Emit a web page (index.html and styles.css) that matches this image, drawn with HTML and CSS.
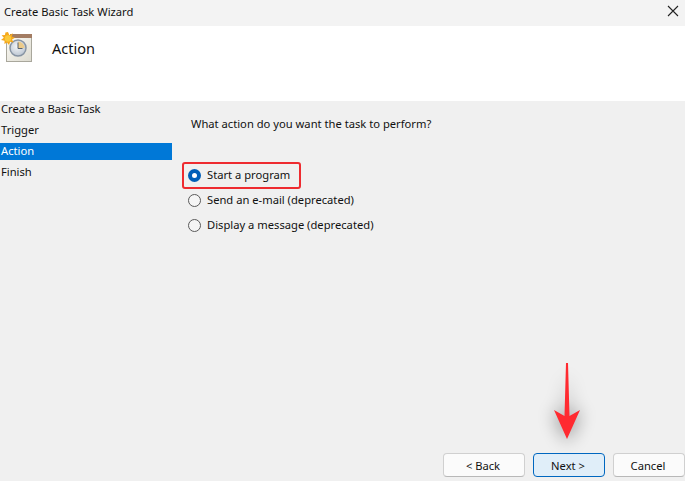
FILE: index.html
```html
<!DOCTYPE html>
<html lang="en">
<head>
<meta charset="utf-8">
<title>Create Basic Task Wizard</title>
<link rel="stylesheet" href="styles.css">
</head>
<body>
<div class="window">
  <header class="titlebar">
    <span class="title">Create Basic Task Wizard</span>
    <svg class="close" width="12" height="12" viewBox="0 0 12 12"><path d="M1 1l10 10M11 1L1 11" stroke="#222" stroke-width="1.1" fill="none"/></svg>
  </header>
  <section class="banner">
    <svg class="task-icon" width="33" height="33" viewBox="0 0 33 33">
      <defs>
        <linearGradient id="page" x1="0" y1="0" x2="1" y2="1"><stop offset="0" stop-color="#fcfbf6"/><stop offset="1" stop-color="#dddbd0"/></linearGradient>
        <radialGradient id="face" cx=".45" cy=".4" r=".6"><stop offset="0" stop-color="#f4f6f8"/><stop offset="1" stop-color="#bcc6d2"/></radialGradient>
      </defs>
      <rect x="6" y="4" width="26" height="27" fill="#a9a79c"/>
      <rect x="7" y="6" width="24" height="24" fill="url(#page)"/>
      <rect x="10" y="3" width="22" height="4" fill="#a37c62"/>
      <circle cx="18" cy="17" r="8" fill="url(#face)" stroke="#8794a3" stroke-width="1.5"/>
      <path d="M18 17V10.500a6.500 6.500 0 0 1 6.500 6.500z" fill="#eccb8a"/>
      <path d="M18 11.500V17.500H22.500" stroke="#56616e" stroke-width="1" fill="none"/>
      <path d="M8 1l1.400 3.200L12.800 2.200 11.800 5.400l3.200 1.400-3 1.600 1.600 3-3.400-.6L9 14 7 11.400 4.400 13l.2-3.200L1 9 3.800 6.800 1.600 4.200l3.400-.2L5.400 1.600z" fill="#f5a81c"/>
      <circle cx="8" cy="7.500" r="3.200" fill="#fbc93a"/>
    </svg>
    <h1 class="heading">Action</h1>
  </section>
  <div class="content">
    <nav class="steps">
      <div class="step">Create a Basic Task</div>
      <div class="step">Trigger</div>
      <div class="step step-active">Action</div>
      <div class="step">Finish</div>
    </nav>
    <main class="pane">
      <p class="question">What action do you want the task to perform?</p>
      <div class="options">
        <div class="option"><span class="radio radio-on"></span>Start a program</div>
        <div class="option"><span class="radio"></span>Send an e-mail (deprecated)</div>
        <div class="option"><span class="radio"></span>Display a message (deprecated)</div>
      </div>
    </main>
  </div>
  <footer class="actions">
    <button class="btn btn-back">&lt; Back</button>
    <button class="btn btn-next">Next &gt;</button>
    <button class="btn btn-cancel">Cancel</button>
  </footer>
  <div class="callout"></div>
  <svg class="arrow" width="90" height="110" viewBox="0 0 90 110">
    <defs>
      <filter id="soft" x="-60%" y="-50%" width="220%" height="200%"><feGaussianBlur stdDeviation="9"/></filter>
    </defs>
    <path d="M45 10L48 55 60 50 45 82 30 50 42 55z" fill="#000" opacity=".38" filter="url(#soft)"/>
    <path d="M44 2H46L47.500 55 58 49 45 78 32 49 42.500 55z" fill="#ff2a30"/>
  </svg>
</div>
</body>
</html>
```
FILE: styles.css
```css
* { box-sizing: border-box; }
html, body { margin: 0; padding: 0; }
body {
  width: 685px;
  height: 481px;
  overflow: hidden;
  background: #f0f0f0;
  font-family: "Noto Sans", "Open Sans", sans-serif;
  font-size: 11.2px;
  color: #111;
}
.window {
  position: relative;
  display: flex;
  flex-direction: column;
  width: 685px;
  height: 481px;
}
.titlebar {
  display: flex;
  align-items: center;
  justify-content: space-between;
  height: 26px;
  flex: none;
  padding: 0 6px 4px 4px;
  background: #f3f3f3;
}
.banner {
  display: flex;
  align-items: flex-start;
  height: 75px;
  flex: none;
  background: #fff;
}
.task-icon { margin: 5px 0 0 0; flex: none; }
.heading {
  margin: 11px 0 0 19px;
  font-size: 14.5px;
  font-weight: 400;
  line-height: 22px;
}
.content {
  display: flex;
  flex: 1;
  min-height: 0;
}
.steps {
  display: flex;
  flex-direction: column;
  gap: 4px;
  width: 172px;
  flex: none;
}
.step {
  height: 17px;
  line-height: 16px;
  padding-left: 1px;
  white-space: nowrap;
}
.step-active { background: #0078d7; color: #fff; }
.pane { flex: 1; padding: 15px 0 0 19px; }
.question { margin: 0; line-height: 16px; }
.options {
  display: flex;
  flex-direction: column;
  gap: 9px;
  margin-top: 35px;
  margin-left: -3px;
}
.option {
  display: flex;
  align-items: center;
  gap: 6px;
  height: 16px;
  line-height: 16px;
  white-space: nowrap;
}
.radio {
  display: block;
  width: 13px;
  height: 13px;
  flex: none;
  border: 1px solid #5a5a5a;
  border-radius: 50%;
  background: #f5f5f5;
}
.radio-on {
  border: 4px solid #005fb8;
  background: #fff;
}
.actions {
  display: flex;
  justify-content: flex-end;
  gap: 8px;
  flex: none;
  height: 28px;
  padding-bottom: 4px;
}
.btn {
  height: 24px;
  padding: 0 2px 0 0;
  border: 1px solid #d0d0d0;
  border-bottom-color: #b8b8b8;
  border-radius: 4px;
  background: #fbfbfb;
  font: inherit;
  color: #111;
}
.btn-back { width: 82px; }
.btn-next { width: 72px; background: #e0eef9; border-color: #0067c0; }
.btn-cancel { width: 72px; }
.callout {
  position: absolute;
  left: 182px;
  top: 162px;
  width: 119px;
  height: 27px;
  border: 2px solid #ee2b30;
  border-radius: 3px;
}
.arrow {
  position: absolute;
  left: 522px;
  top: 361px;
}
```
